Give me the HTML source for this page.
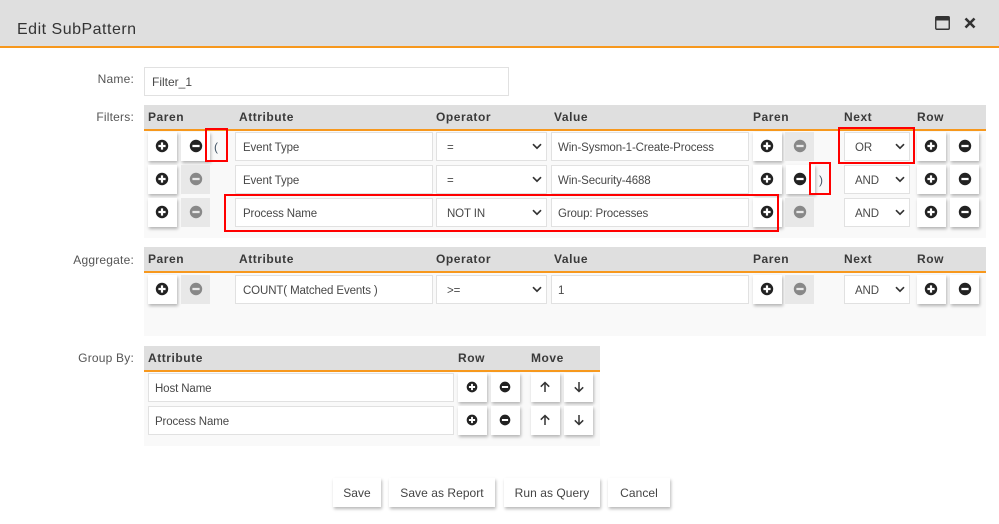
<!DOCTYPE html>
<html>
<head>
<meta charset="utf-8">
<style>
html,body{margin:0;padding:0;background:#fff}
#p{position:relative;width:999px;height:524px;overflow:hidden;background:#fff;font-family:"Liberation Sans",sans-serif;font-size:12px;color:#444}
#p div{position:absolute;box-sizing:border-box;white-space:nowrap}
.band{background:#dfdfdf}
.or{background:#f7981d;height:2px}
.bg{background:#f9f9f9}
.lb{right:865px;text-align:right;color:#555;letter-spacing:.2px;line-height:16px}
.h{font-weight:bold;color:#3a3a3a;letter-spacing:.55px;line-height:16px}
.i{background:#fff;border:1px solid #e1e1e1;height:29px;line-height:30px;padding-left:7px;color:#484848;font-size:11.5px;letter-spacing:-.12px}
.v{padding-left:6px}
.b{width:29px;height:29px;background:#fff;box-shadow:1px 2px 3px rgba(0,0,0,.28)}
.d{width:29px;height:29px;background:#e8e8e8}
.b svg,.d svg,.i svg{position:absolute}
.f{height:29px;width:auto;background:#fff;box-shadow:1px 2px 3px rgba(0,0,0,.28);line-height:30px;text-align:center;color:#444;letter-spacing:.05px}
.r{border:2px solid #f00;z-index:5}
</style>
</head>
<body>
<div id="p">
<svg width="0" height="0" style="position:absolute">
<symbol id="pl" viewBox="0 0 14 14"><path fill-rule="evenodd" d="M7 .8a6.2 6.2 0 1 0 0 12.4A6.2 6.2 0 0 0 7 .8zM5.9 3.4h2.2v2.5h2.5v2.2H8.100v2.500H5.900V8.100H3.400V5.900h2.500z"/></symbol>
<symbol id="mi" viewBox="0 0 14 14"><path fill-rule="evenodd" d="M7 .8a6.200 6.200 0 1 0 0 12.400A6.200 6.200 0 0 0 7 .8zM3.400 5.900h7.200v2.200H3.400z"/></symbol>
<symbol id="ch" viewBox="0 0 10 7"><path d="M1 1.200l4 4 4-4" fill="none" stroke="#333" stroke-width="1.700"/></symbol>
<symbol id="up" viewBox="0 0 12 12"><path d="M6 11V1.500M1.800 5.700L6 1.500l4.200 4.200" fill="none" stroke="#333" stroke-width="1.500"/></symbol>
<symbol id="dn" viewBox="0 0 12 12"><path d="M6 1v9.500M1.800 6.300L6 10.500l4.200-4.200" fill="none" stroke="#333" stroke-width="1.500"/></symbol>
</svg>

<div class="band" style="left:0;top:0;width:999px;height:46px"></div>
<div class="or" style="left:0;top:46px;width:999px"></div>
<div style="left:17px;top:20px;font-size:16px;line-height:19px;color:#333;letter-spacing:.5px">Edit SubPattern</div>
<svg style="position:absolute;left:935px;top:16px" width="15" height="15" viewBox="0 0 15 15"><rect x=".75" y=".75" width="13.500" height="12.500" rx="1" fill="none" stroke="#333" stroke-width="1.400"/><rect x="1" y="1" width="13" height="3.500" fill="#333"/></svg>
<svg style="position:absolute;left:964px;top:17px" width="12" height="12" viewBox="0 0 12 12"><path d="M1.500 1.500l9 9M10.500 1.500l-9 9" stroke="#333" stroke-width="2.600" fill="none"/></svg>

<div class="lb" style="top:71px">Name:</div>
<div class="i" style="left:144px;top:67px;width:365px;line-height:28px;font-size:12px;letter-spacing:0">Filter_1</div>

<!-- Filters -->
<div class="lb" style="top:109px">Filters:</div>
<div class="bg" style="left:144px;top:131px;width:842px;height:107px"></div>
<div class="band" style="left:144px;top:105px;width:842px;height:24px"></div>
<div class="or" style="left:144px;top:129px;width:842px"></div>
<div class="h" style="left:148px;top:109px">Paren</div>
<div class="h" style="left:239px;top:109px">Attribute</div>
<div class="h" style="left:436px;top:109px">Operator</div>
<div class="h" style="left:554px;top:109px">Value</div>
<div class="h" style="left:753px;top:109px">Paren</div>
<div class="h" style="left:844px;top:109px">Next</div>
<div class="h" style="left:917px;top:109px">Row</div>

<!-- row 1 -->
<div class="b" style="left:148px;top:132px"><svg width="14" height="14" style="left:7px;top:7px" fill="#222"><use href="#pl"/></svg></div>
<div class="b" style="left:181px;top:132px"><svg width="14" height="14" style="left:8px;top:7px" fill="#222"><use href="#mi"/></svg></div>
<div style="left:214px;top:139px;line-height:16px;color:#456">(</div>
<div class="i" style="left:235px;top:132px;width:198px">Event Type</div>
<div class="i" style="left:436px;top:132px;width:111px;padding-left:10px">=<svg width="10" height="7" style="left:95px;top:10px"><use href="#ch"/></svg></div>
<div class="i v" style="left:551px;top:132px;width:198px">Win-Sysmon-1-Create-Process</div>
<div class="b" style="left:753px;top:132px"><svg width="14" height="14" style="left:7px;top:7px" fill="#222"><use href="#pl"/></svg></div>
<div class="d" style="left:785px;top:132px"><svg width="14" height="14" style="left:8px;top:7px" fill="#888"><use href="#mi"/></svg></div>
<div class="i" style="left:844px;top:132px;width:66px;padding-left:10px">OR<svg width="10" height="7" style="left:50px;top:10px"><use href="#ch"/></svg></div>
<div class="b" style="left:917px;top:132px"><svg width="14" height="14" style="left:7px;top:7px" fill="#222"><use href="#pl"/></svg></div>
<div class="b" style="left:950px;top:132px"><svg width="14" height="14" style="left:8px;top:7px" fill="#222"><use href="#mi"/></svg></div>

<!-- row 2 -->
<div class="b" style="left:148px;top:165px"><svg width="14" height="14" style="left:7px;top:7px" fill="#222"><use href="#pl"/></svg></div>
<div class="d" style="left:181px;top:165px"><svg width="14" height="14" style="left:8px;top:7px" fill="#888"><use href="#mi"/></svg></div>
<div class="i" style="left:235px;top:165px;width:198px">Event Type</div>
<div class="i" style="left:436px;top:165px;width:111px;padding-left:10px">=<svg width="10" height="7" style="left:95px;top:10px"><use href="#ch"/></svg></div>
<div class="i v" style="left:551px;top:165px;width:198px">Win-Security-4688</div>
<div class="b" style="left:753px;top:165px"><svg width="14" height="14" style="left:7px;top:7px" fill="#222"><use href="#pl"/></svg></div>
<div class="b" style="left:786px;top:165px"><svg width="14" height="14" style="left:7px;top:7px" fill="#222"><use href="#mi"/></svg></div>
<div style="left:819px;top:172px;line-height:16px;color:#456">)</div>
<div class="i" style="left:844px;top:165px;width:66px;padding-left:10px">AND<svg width="10" height="7" style="left:50px;top:10px"><use href="#ch"/></svg></div>
<div class="b" style="left:917px;top:165px"><svg width="14" height="14" style="left:7px;top:7px" fill="#222"><use href="#pl"/></svg></div>
<div class="b" style="left:950px;top:165px"><svg width="14" height="14" style="left:8px;top:7px" fill="#222"><use href="#mi"/></svg></div>

<!-- row 3 -->
<div class="b" style="left:148px;top:198px"><svg width="14" height="14" style="left:7px;top:7px" fill="#222"><use href="#pl"/></svg></div>
<div class="d" style="left:181px;top:198px"><svg width="14" height="14" style="left:8px;top:7px" fill="#888"><use href="#mi"/></svg></div>
<div class="i" style="left:235px;top:198px;width:198px">Process Name</div>
<div class="i" style="left:436px;top:198px;width:111px;padding-left:10px">NOT IN<svg width="10" height="7" style="left:95px;top:10px"><use href="#ch"/></svg></div>
<div class="i v" style="left:551px;top:198px;width:198px">Group: Processes</div>
<div class="b" style="left:753px;top:198px"><svg width="14" height="14" style="left:7px;top:7px" fill="#222"><use href="#pl"/></svg></div>
<div class="d" style="left:785px;top:198px"><svg width="14" height="14" style="left:8px;top:7px" fill="#888"><use href="#mi"/></svg></div>
<div class="i" style="left:844px;top:198px;width:66px;padding-left:10px">AND<svg width="10" height="7" style="left:50px;top:10px"><use href="#ch"/></svg></div>
<div class="b" style="left:917px;top:198px"><svg width="14" height="14" style="left:7px;top:7px" fill="#222"><use href="#pl"/></svg></div>
<div class="b" style="left:950px;top:198px"><svg width="14" height="14" style="left:8px;top:7px" fill="#222"><use href="#mi"/></svg></div>

<!-- Aggregate -->
<div class="lb" style="top:252px">Aggregate:</div>
<div class="bg" style="left:144px;top:273px;width:842px;height:63px"></div>
<div class="band" style="left:144px;top:247px;width:842px;height:24px"></div>
<div class="or" style="left:144px;top:271px;width:842px"></div>
<div class="h" style="left:148px;top:251px">Paren</div>
<div class="h" style="left:239px;top:251px">Attribute</div>
<div class="h" style="left:436px;top:251px">Operator</div>
<div class="h" style="left:554px;top:251px">Value</div>
<div class="h" style="left:753px;top:251px">Paren</div>
<div class="h" style="left:844px;top:251px">Next</div>
<div class="h" style="left:917px;top:251px">Row</div>
<div class="b" style="left:148px;top:275px"><svg width="14" height="14" style="left:7px;top:7px" fill="#222"><use href="#pl"/></svg></div>
<div class="d" style="left:181px;top:275px"><svg width="14" height="14" style="left:8px;top:7px" fill="#888"><use href="#mi"/></svg></div>
<div class="i" style="left:235px;top:275px;width:198px">COUNT( Matched Events )</div>
<div class="i" style="left:436px;top:275px;width:111px;padding-left:10px">&gt;=<svg width="10" height="7" style="left:95px;top:10px"><use href="#ch"/></svg></div>
<div class="i v" style="left:551px;top:275px;width:198px">1</div>
<div class="b" style="left:753px;top:275px"><svg width="14" height="14" style="left:7px;top:7px" fill="#222"><use href="#pl"/></svg></div>
<div class="d" style="left:785px;top:275px"><svg width="14" height="14" style="left:8px;top:7px" fill="#888"><use href="#mi"/></svg></div>
<div class="i" style="left:844px;top:275px;width:66px;padding-left:10px">AND<svg width="10" height="7" style="left:50px;top:10px"><use href="#ch"/></svg></div>
<div class="b" style="left:917px;top:275px"><svg width="14" height="14" style="left:7px;top:7px" fill="#222"><use href="#pl"/></svg></div>
<div class="b" style="left:950px;top:275px"><svg width="14" height="14" style="left:8px;top:7px" fill="#222"><use href="#mi"/></svg></div>

<!-- Group By -->
<div class="lb" style="top:350px">Group By:</div>
<div class="bg" style="left:144px;top:372px;width:456px;height:74px"></div>
<div class="band" style="left:144px;top:346px;width:456px;height:24px"></div>
<div class="or" style="left:144px;top:370px;width:456px"></div>
<div class="h" style="left:148px;top:350px">Attribute</div>
<div class="h" style="left:458px;top:350px">Row</div>
<div class="h" style="left:531px;top:350px">Move</div>

<div class="i v" style="left:148px;top:373px;width:306px">Host Name</div>
<div class="b" style="left:458px;top:373px"><svg width="12" height="12" style="left:8px;top:8px" fill="#222"><use href="#pl"/></svg></div>
<div class="b" style="left:491px;top:373px"><svg width="12" height="12" style="left:8px;top:8px" fill="#222"><use href="#mi"/></svg></div>
<div class="b" style="left:531px;top:373px"><svg width="12" height="12" style="left:8px;top:8px"><use href="#up"/></svg></div>
<div class="b" style="left:564px;top:373px"><svg width="12" height="12" style="left:9px;top:8px"><use href="#dn"/></svg></div>

<div class="i v" style="left:148px;top:406px;width:306px">Process Name</div>
<div class="b" style="left:458px;top:406px"><svg width="12" height="12" style="left:8px;top:8px" fill="#222"><use href="#pl"/></svg></div>
<div class="b" style="left:491px;top:406px"><svg width="12" height="12" style="left:8px;top:8px" fill="#222"><use href="#mi"/></svg></div>
<div class="b" style="left:531px;top:406px"><svg width="12" height="12" style="left:8px;top:8px"><use href="#up"/></svg></div>
<div class="b" style="left:564px;top:406px"><svg width="12" height="12" style="left:9px;top:8px"><use href="#dn"/></svg></div>

<!-- Footer -->
<div class="f" style="left:333px;top:478px;width:48px">Save</div>
<div class="f" style="left:389px;top:478px;width:106px">Save as Report</div>
<div class="f" style="left:504px;top:478px;width:96px">Run as Query</div>
<div class="f" style="left:608px;top:478px;width:62px">Cancel</div>

<!-- Red highlight boxes -->
<div class="r" style="left:205px;top:128px;width:23px;height:34px"></div>
<div class="r" style="left:809px;top:162px;width:22px;height:33px"></div>
<div class="r" style="left:838px;top:127px;width:77px;height:37px"></div>
<div class="r" style="left:224px;top:194px;width:555px;height:38px"></div>
</div>
</body>
</html>
